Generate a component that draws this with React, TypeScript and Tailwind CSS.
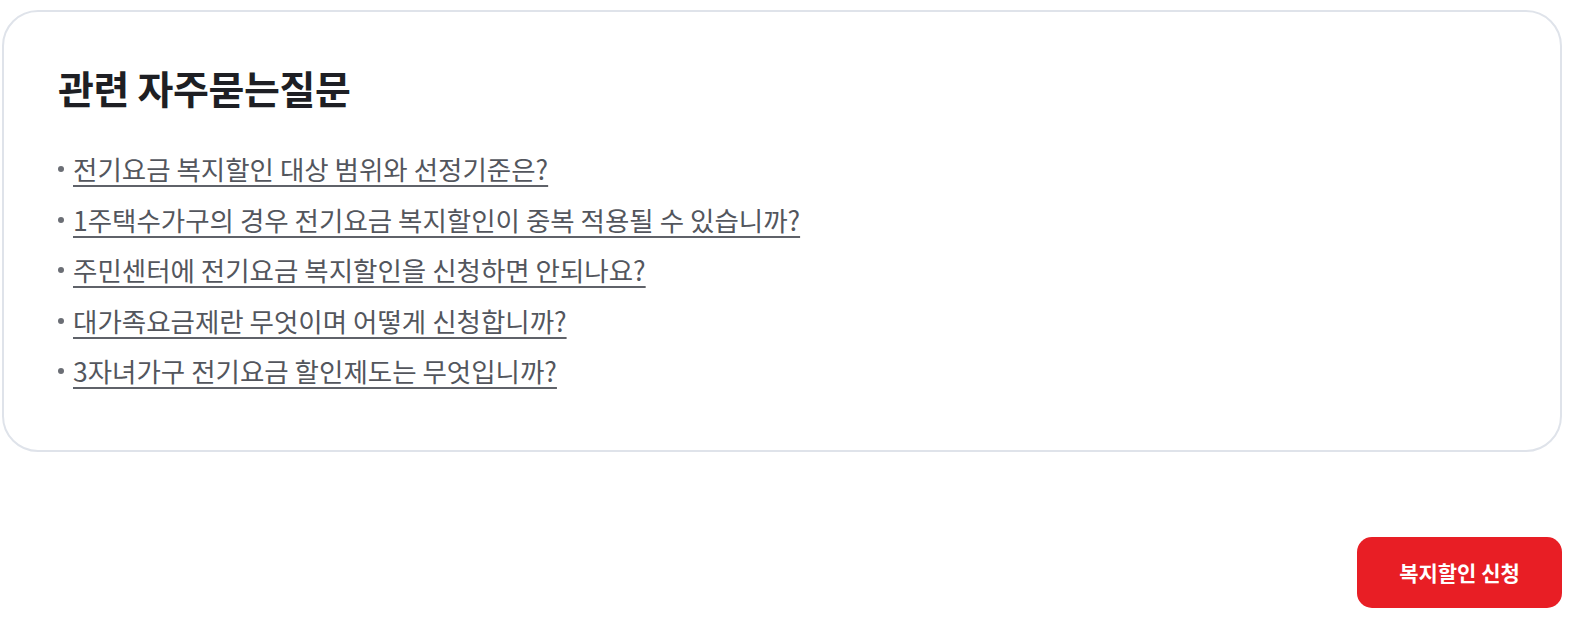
const faqs = [
  "전기요금 복지할인 대상 범위와 선정기준은?",
  "1주택수가구의 경우 전기요금 복지할인이 중복 적용될 수 있습니까?",
  "주민센터에 전기요금 복지할인을 신청하면 안되나요?",
  "대가족요금제란 무엇이며 어떻게 신청합니까?",
  "3자녀가구 전기요금 할인제도는 무엇입니까?",
];

export default function App() {
  return (
    <div
      className="w-[1587px] h-[627px] bg-white pl-[2px] pt-[10px]"
      style={{ fontFamily: '"Noto Sans CJK KR", "Noto Sans", sans-serif' }}
    >
      <div className="w-[1560px] flex flex-col">
        <section className="w-full h-[442px] rounded-[36px] border-2 border-[#dfe3ea] pl-[54px] pt-[50px]">
          <h2 className="text-[39px] leading-[50px] font-bold text-[#1e1f24] tracking-[-0.01em]">
            관련 자주묻는질문
          </h2>
          <ul className="mt-[32px] flex flex-col">
            {faqs.map((q) => (
              <li key={q} className="flex items-center h-[50.5px]">
                <span className="w-[6px] h-[6px] rounded-full bg-[#6b6e75] mr-[9px]" />
                <a
                  href="#"
                  className="text-[26.5px] leading-[36px] text-[#53565d] underline underline-offset-[5px] decoration-[2px] decoration-[#5f6269]"
                >
                  {q}
                </a>
              </li>
            ))}
          </ul>
        </section>
        <div className="flex justify-end mt-[85px]">
          <button className="w-[205px] h-[71px] rounded-[15px] bg-[#e81e25] text-white text-[21px] font-bold">
            복지할인 신청
          </button>
        </div>
      </div>
    </div>
  );
}
